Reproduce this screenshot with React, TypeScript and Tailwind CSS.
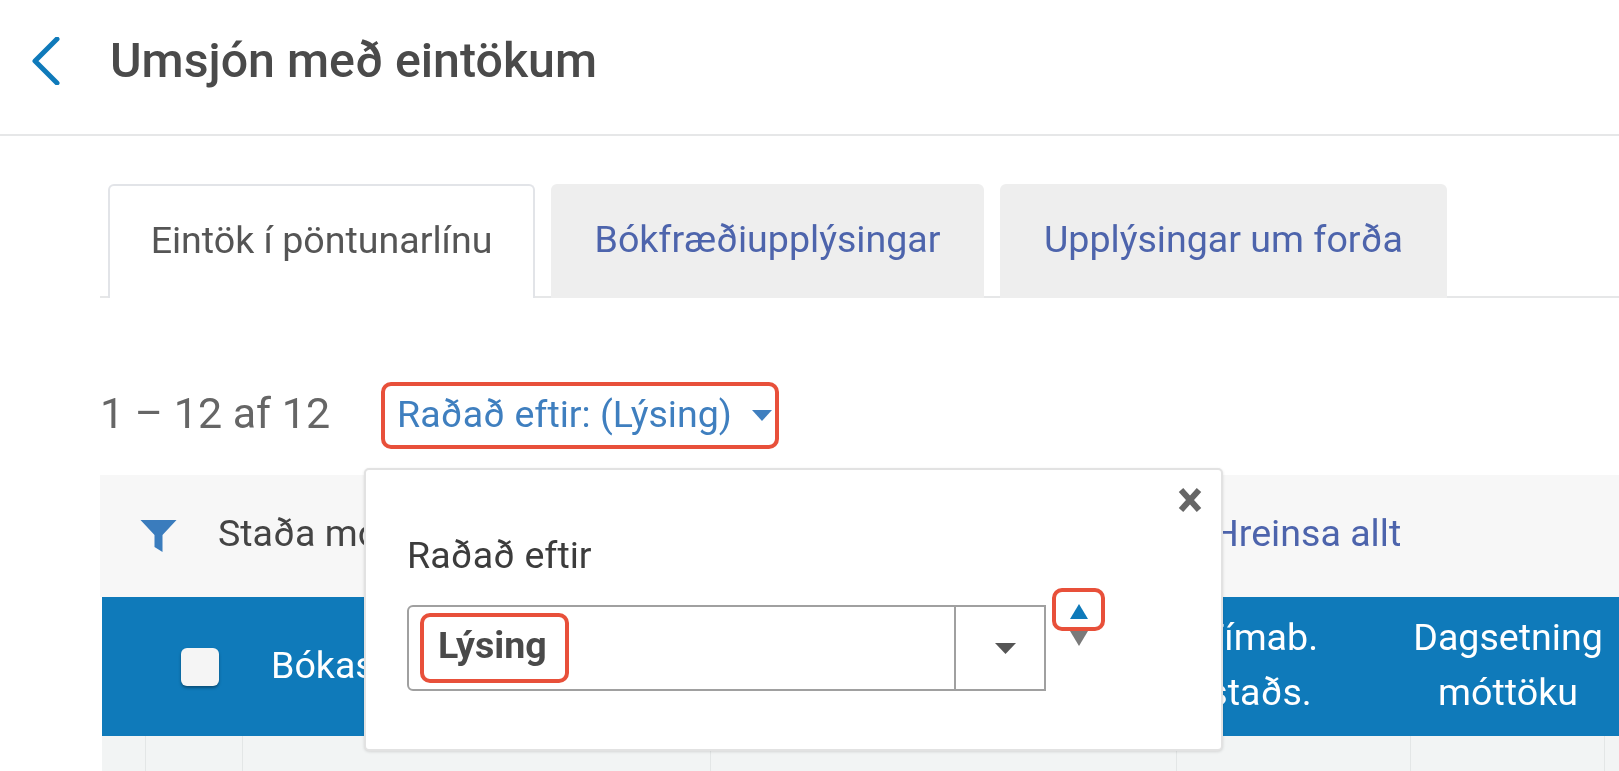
const columns = "ml-[2px] grid grid-cols-[44px_97px_468px_466px_234px_194px_1fr]";

function Triangle({ up, className }: { up?: boolean; className: string }) {
  return (
    <svg viewBox="0 0 20 14" preserveAspectRatio="none" className={className}>
      <path d={up ? "M10 0 20 14H0Z" : "M0 0H20L10 14Z"} fill="currentColor" />
    </svg>
  );
}

function SortPopup() {
  return (
    <div className="absolute left-[264px] top-[-7px] z-10 h-[283px] w-[859px] rounded-[5px] border-2 border-[#e2e2e2] bg-white pl-[41px] pt-[65px] shadow-[0_1px_3px_rgba(0,0,0,0.12)]">
      <svg viewBox="0 0 26 26" className="absolute right-[18px] top-[17px] h-[26px] w-[26px] text-[#666666]">
        <path d="M4 3 22 23M22 3 4 23" stroke="currentColor" strokeWidth="6" />
      </svg>
      <div className="text-[37.6px] leading-[40px] text-[#3c3c3c]">Raðað eftir</div>
      <div className="mt-[30px] flex items-start">
        <div className="flex h-[86px] w-[639px] rounded-l-[6px] border-2 border-[#a0a0a0]">
          <div className="flex flex-1 items-center pl-[11px]">
            <span className="flex h-[70px] w-[149px] items-center rounded-[10px] border-[4px] border-[#e8503a] pb-[5px] pl-[14px] text-[37.6px] font-bold text-[#4a4a4a]">
              Lýsing
            </span>
          </div>
          <div className="flex w-[90px] items-center justify-center border-l-2 border-[#a0a0a0] pl-[10px]">
            <Triangle className="h-[11px] w-[21px] text-[#555555]" />
          </div>
        </div>
        <div className="ml-[6px] mt-[-17px] flex flex-col items-center">
          <div className="flex h-[43px] w-[53px] items-center justify-center rounded-[10px] border-[4px] border-[#e8503a]">
            <Triangle up className="mt-[3px] h-[15px] w-[18px] text-[#0f7aba]" />
          </div>
          <Triangle className="h-[15px] w-[18px] text-[#7a7a7a]" />
        </div>
      </div>
    </div>
  );
}

export default function App() {
  return (
    <div className="h-[771px] w-full overflow-hidden bg-white font-['Roboto',sans-serif] blur-[0.5px]">
      <header className="flex h-[136px] items-center border-b-2 border-[#e6e7e8] pl-[31px]">
        <svg viewBox="0 0 30 48" className="mb-[12px] h-[48px] w-[30px] text-[#0f7aba]">
          <path d="M26 2 4 24l22 22" fill="none" stroke="currentColor" strokeWidth="5" strokeLinecap="round" strokeLinejoin="round" />
        </svg>
        <h1 className="mb-[12px] ml-[49px] text-[48.3px] font-medium text-[#4a4a4a]">Umsjón með eintökum</h1>
      </header>

      <div className="ml-[100px]">
        <div className="mt-[48px] flex h-[114px] items-end gap-[16px] border-b-2 border-[#e6e7e8] pl-[8px]">
          <div className="mb-[-2px] flex h-[114px] w-[427px] items-center justify-center rounded-t-[6px] border-2 border-b-0 border-[#e2e4e8] bg-white pb-[3px] text-[37.6px] text-[#555555]">
            Eintök í pöntunarlínu
          </div>
          <div className="mb-[-2px] flex h-[114px] w-[433px] items-center justify-center rounded-t-[6px] bg-[#eeeeee] pb-[3px] text-[37.6px] text-[#4d64ac]">
            Bókfræðiupplýsingar
          </div>
          <div className="mb-[-2px] flex h-[114px] w-[447px] items-center justify-center rounded-t-[6px] bg-[#eeeeee] pb-[3px] text-[37.6px] text-[#4d64ac]">
            Upplýsingar um forða
          </div>
        </div>

        <div className="flex h-[177px] items-start">
          <div className="mt-[84px] flex items-center">
            <span className="w-[281px] pb-[5px] text-[43px] leading-[50px] text-[#666666]">1 – 12 af 12</span>
            <div className="flex h-[67px] w-[398px] items-center rounded-[10px] border-[4px] border-[#e8503a] pl-[12px]">
              <span className="pb-[2px] text-[37.6px] text-[#3f7fbf]">Raðað eftir: (Lýsing)</span>
              <Triangle className="ml-[20px] h-[11px] w-[20px] text-[#3f7fbf]" />
            </div>
          </div>
        </div>

        <div className="relative">
          <SortPopup />
          <div className="flex h-[122px] items-center bg-[#f7f7f7] pl-[40px] text-[37.6px]">
            <svg viewBox="0 0 36 32" className="h-[32px] w-[37px] text-[#3a7cbd]">
              <path d="M0 0H36L22 15V32L14 27V15Z" fill="currentColor" />
            </svg>
            <span className="mb-[5px] ml-[41px] w-[994px] whitespace-nowrap text-[#444444]">Staða móttöku</span>
            <span className="mb-[5px] text-[#4d64ac]">Hreinsa allt</span>
          </div>

          <div className={`${columns} h-[139px] items-center bg-[#0f7aba] text-[37.6px] text-white`}>
            <div />
            <div className="flex justify-center pl-[11px]">
              <span className="h-[38px] w-[38px] rounded-[6px] bg-[#f5f5f5] shadow-[0_2px_3px_rgba(0,0,0,0.35)]" />
            </div>
            <div className="pb-[3px] pl-[28px]">Bókasafn</div>
            <div />
            <div className="ml-[-68px] pb-[3px] text-center leading-[55px]">
              Tímab.
              <br />
              staðs.
            </div>
            <div className="pb-[3px] text-center leading-[55px]">
              Dagsetning
              <br />
              móttöku
            </div>
            <div />
          </div>

          <div className={`${columns} h-[60px] bg-[#f2f4f4]`}>
            <div className="border-r border-[#e3e6e6]" />
            <div className="border-r border-[#e3e6e6]" />
            <div className="border-r border-[#e3e6e6]" />
            <div className="border-r border-[#e3e6e6]" />
            <div className="border-r border-[#e3e6e6]" />
            <div className="border-r border-[#e3e6e6]" />
            <div />
          </div>
        </div>
      </div>
    </div>
  );
}
